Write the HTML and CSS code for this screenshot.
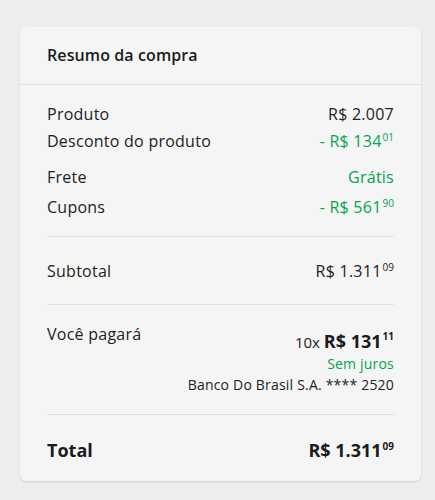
FILE: index.html
```html
<!DOCTYPE html>
<html lang="pt-BR">
  <head>
    <meta charset="UTF-8" />
    <meta name="viewport" content="width=device-width, initial-scale=1.0" />
    <title>Resumo da compra</title>
    <link rel="stylesheet" href="styles.css">
  </head>
  <body>
    <div class="card">
      <div class="card-header">Resumo da compra</div>
      <div class="card-body">
        <div class="group">
          <div class="row">
            <span>Produto</span>
            <span>R$ 2.007</span>
          </div>
          <div class="row row-tight">
            <span>Desconto do produto</span>
            <span class="green">- R$ 134<sup>01</sup></span>
          </div>
          <div class="row row-wide">
            <span>Frete</span>
            <span class="green">Grátis</span>
          </div>
          <div class="row row-mid">
            <span>Cupons</span>
            <span class="green">- R$ 561<sup>90</sup></span>
          </div>
        </div>
        <div class="group">
          <div class="row">
            <span>Subtotal</span>
            <span>R$ 1.311<sup>09</sup></span>
          </div>
        </div>
        <div class="group">
          <div class="row">
            <span>Você pagará</span>
            <div class="pay">
              <div class="installments">10x <strong>R$ 131<sup>11</sup></strong></div>
              <div class="green small">Sem juros</div>
              <div class="small">Banco Do Brasil S.A. **** 2520</div>
            </div>
          </div>
        </div>
        <div class="group total">
          <div class="row">
            <span>Total</span>
            <span>R$ 1.311<sup>09</sup></span>
          </div>
        </div>
      </div>
    </div>
  </body>
</html>
```

FILE: styles.css
```css
body {
  margin: 0;
  padding: 27px 14px 19px 20px;
  background: #ededed;
  font-family: "Open Sans", sans-serif;
  color: #222;
}
.card {
  background: #f5f5f5;
  border-radius: 6px;
  box-shadow: 0 1px 2px rgba(0, 0, 0, 0.12);
}
.card-header {
  padding: 0 27px;
  height: 57px;
  line-height: 57px;
  font-size: 16px;
  font-weight: 600;
  letter-spacing: 0.1px;
  color: #1b1b1b;
  border-bottom: 1px solid #e3e3e3;
}
.card-body {
  padding: 0 27px;
}
.group {
  padding: 19px 0;
  border-bottom: 1px solid #e0e0e0;
}
.group:nth-child(2) {
  padding: 24px 0 23px;
}
.group:nth-child(3) {
  padding: 19px 0 19px;
}
.row {
  display: flex;
  justify-content: space-between;
  align-items: flex-start;
  font-size: 16px;
  line-height: 20px;
  letter-spacing: 0.25px;
}
.row-tight {
  margin-top: 7px;
}
.row-wide {
  margin-top: 16px;
}
.row-mid {
  margin-top: 10px;
}
.green {
  color: #00a650;
}
sup {
  font-size: 10px;
  vertical-align: top;
  line-height: 12px;
  margin-left: 1px;
  letter-spacing: 0;
}
.pay {
  text-align: right;
  padding-top: 6px;
}
.installments {
  font-size: 15px;
  line-height: 22px;
  letter-spacing: 0;
}
.installments strong {
  font-size: 18px;
  color: #1b1b1b;
}
.small {
  font-size: 14px;
  line-height: 21px;
  letter-spacing: 0.2px;
}
.total {
  border-bottom: none;
  padding: 25px 0 21px;
}
.total .row {
  font-size: 18px;
  font-weight: 700;
  letter-spacing: 0;
  color: #1b1b1b;
}
```
